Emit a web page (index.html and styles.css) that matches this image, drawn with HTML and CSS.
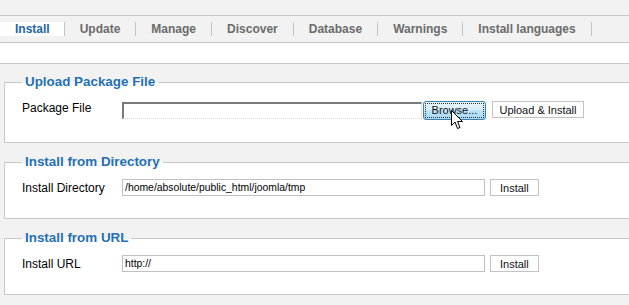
FILE: index.html
```html
<!DOCTYPE html>
<html lang="en">

<head>
    <meta charset="UTF-8">
    <title>Extension Manager: Install</title>
    <link rel="stylesheet" href="styles.css">
</head>

<body>
    <div class="submenu">
        <a class="tab active" href="#">Install</a>
        <a class="tab" href="#">Update</a>
        <a class="tab" href="#">Manage</a>
        <a class="tab" href="#">Discover</a>
        <a class="tab" href="#">Database</a>
        <a class="tab" href="#">Warnings</a>
        <a class="tab" href="#">Install languages</a>
    </div>
    <div class="spacer"></div>

    <form class="install-form">
        <fieldset class="box">
            <legend>Upload Package File</legend>
            <div class="row row-upload">
                <label class="label">Package File</label>
                <input type="text" class="file-field">
                <span class="browse-wrap">
                    <button type="button" class="btn btn-browse"><span>Browse...</span></button>
                    <svg class="cursor" width="12" height="20" viewBox="0 0 12 20">
                        <path d="M0.5 0.5 L0.5 15.5 L4 12 L6.5 18.5 L9 17.5 L6.5 11.5 L11.5 11.5 Z" fill="#fff" stroke="#000" stroke-width="1" />
                    </svg>
                </span>
                <button type="button" class="btn btn-upload">Upload &amp; Install</button>
            </div>
        </fieldset>

        <fieldset class="box">
            <legend>Install from Directory</legend>
            <div class="row">
                <label class="label">Install Directory</label>
                <input type="text" class="text-field" value="/home/absolute/public_html/joomla/tmp">
                <button type="button" class="btn">Install</button>
            </div>
        </fieldset>

        <fieldset class="box">
            <legend>Install from URL</legend>
            <div class="row">
                <label class="label">Install URL</label>
                <input type="text" class="text-field" value="http://">
                <button type="button" class="btn">Install</button>
            </div>
        </fieldset>
    </form>
</body>

</html>
```

FILE: styles.css
```css
* {
    margin: 0;
    padding: 0;
    box-sizing: border-box;
}

html {
    overflow: hidden;
}

body {
    font-family: 'Liberation Sans', Arial, sans-serif;
    font-size: 12px;
    background: #f2f2f2;
    width: 720px;
}

/* 顶部子菜单 */
.submenu {
    margin-top: 15px;
    height: 28px;
    border-top: 1px solid #c8c8c8;
    border-bottom: 1px solid #c8c8c8;
    background: #f2f2f2;
    display: flex;
    align-items: center;
}

.tab {
    display: block;
    height: 14px;
    line-height: 14px;
    padding: 0 15px;
    border-right: 1px solid #c4c4c4;
    color: #6b6b6b;
    font-weight: bold;
    font-size: 12px;
    text-decoration: none;
}

.tab.active {
    background: #fff;
    color: #1d65a6;
    padding-right: 14px;
}

.spacer {
    height: 21px;
    background: #fff;
    border-bottom: 1px solid #c8c8c8;
}

.install-form {
    padding: 10px 0 0 4px;
}

/* 分组框 */
.box {
    background: #fff;
    border: 1px solid #c8c8c8;
    padding: 0 17px 22px 17px;
    margin-bottom: 11px;
}

.box legend {
    color: #2470b3;
    font-weight: bold;
    font-size: 13.4px;
    line-height: 16px;
    padding: 0 3px;
    margin-left: 0;
}

.row {
    display: flex;
    align-items: center;
    margin-top: 9px;
}

.row-upload {
    margin-top: 11px;
}

.row-upload .label {
    align-self: flex-start;
    line-height: 14px;
}

.label {
    width: 100px;
    color: #000;
    font-size: 12px;
}

.text-field {
    width: 363px;
    height: 17px;
    border: 1px solid #c0c0c0;
    font-family: 'Liberation Sans', Arial, sans-serif;
    font-size: 10.4px;
    padding: 0 2px;
    color: #000;
    outline: none;
}

.file-field {
    width: 300px;
    height: 17px;
    border: 2px solid #7a7a7a;
    border-right: 1px solid #e0e0e0;
    border-bottom: 1px dotted #d8d8d8;
    outline: none;
}

.btn {
    height: 17px;
    border: 1px solid #c3c3c3;
    background: #fff;
    font-family: 'Liberation Sans', Arial, sans-serif;
    font-size: 11px;
    color: #111;
    padding: 0 9px;
    margin-left: 5px;
}

.browse-wrap {
    position: relative;
    display: flex;
}

.btn-browse {
    height: 19px;
    width: 63px;
    margin-left: 1px;
    border: 1px solid #3c7fb1;
    border-radius: 3px;
    background: linear-gradient(#e5f4fc 0%, #d9effa 45%, #bde6fd 50%, #a7d9f5 100%);
    padding: 1px;
}

.btn-browse span {
    display: block;
    height: 100%;
    line-height: 13px;
    border: 1px dotted #333;
}

.btn-upload {
    width: 92px;
    margin-left: 6px;
    margin-top: -2px;
    padding: 0;
}

.cursor {
    position: absolute;
    left: 29px;
    top: 9px;
}
```
